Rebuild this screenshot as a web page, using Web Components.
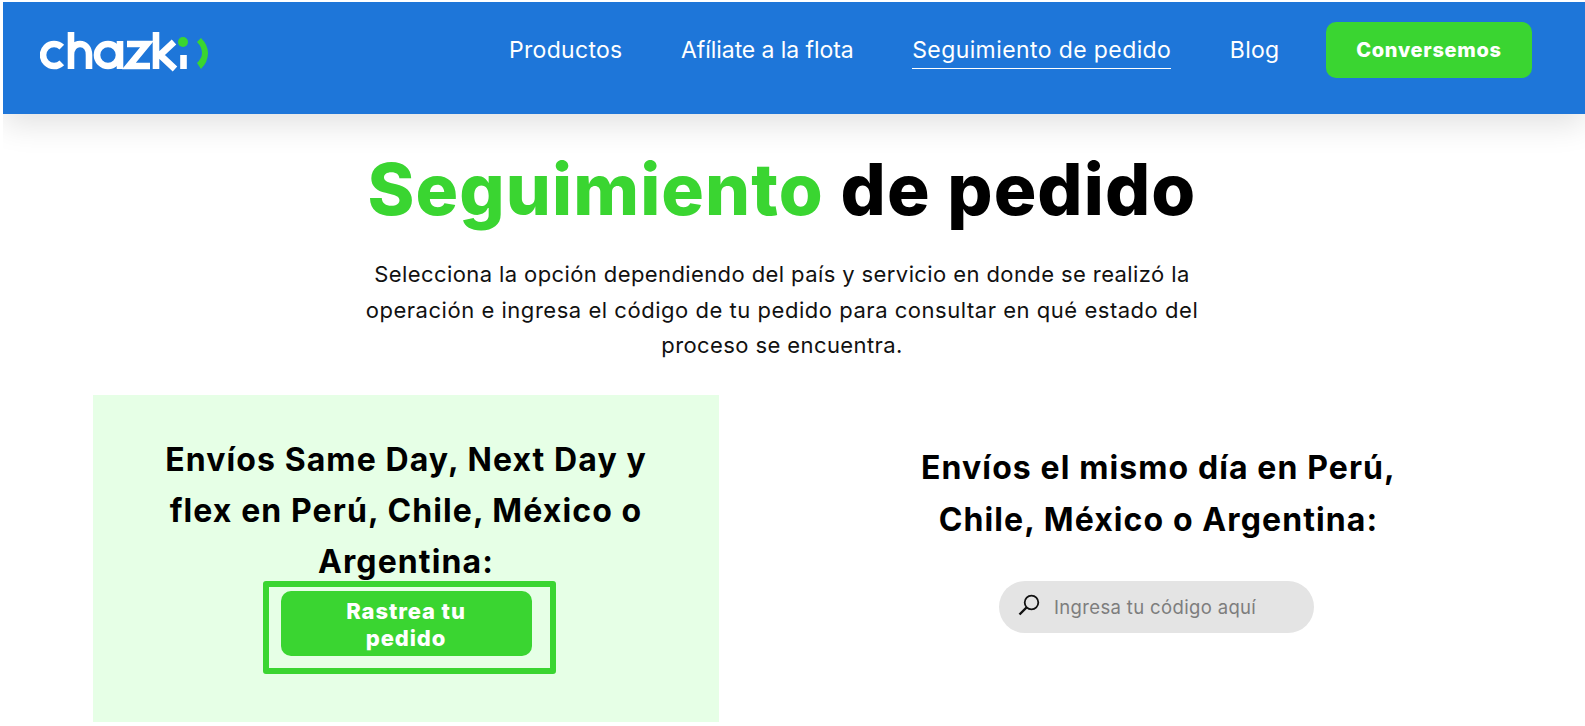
<!DOCTYPE html>
<html lang="es"><head><meta charset="utf-8"><title>Seguimiento de pedido</title>
<style>
html,body{margin:0;padding:0;background:#fff;overflow:hidden}
body{width:1585px;height:726px;font-family:Inter,"Open Sans","Liberation Sans",sans-serif;color:#000}
</style></head><body>
<chazki-page>
<chazki-header></chazki-header>
<chazki-hero></chazki-hero>
</chazki-page>
<script>
function def(name, html){
  customElements.define(name, class extends HTMLElement{
    constructor(){super();this.attachShadow({mode:'open'}).innerHTML=html;}
  });
}
def('chazki-logo',`<style>:host{display:block;width:170px;height:40px}
svg{display:block}</style>
<svg width="170" height="40" viewBox="0 0 170 40" role="img" aria-label="chazki logo">
<g fill="none" stroke="#fff" stroke-width="6.6">
<path d="M21.800 15.200a11 11 0 1 0 0 15.600"/>
<path d="M31 0v37M31 23c0-7 4-11 9-11s9 4 9 11v14"/>
<circle cx="68" cy="23" r="11"/><path d="M80 9v28"/>
<path d="M87 12h20L89 34h21"/>
<path d="M116 0v37M134 10l-14 13 15 14"/>
<path d="M143.500 23v14"/>
</g>
<circle cx="143" cy="10" r="5" fill="#3ad531"/>
<path d="M157 10L161 6Q168 13 168 21Q168 30 161 37L157 31Q162 26 162 21Q162 15 157 10Z" fill="#3ad531"/>
</svg>`);
def('chazki-nav-link',`<style>:host{display:block;font:400 23px/30px Inter,"Open Sans",sans-serif;color:#fff;letter-spacing:.3px;white-space:nowrap}
:host([active]) span{border-bottom-color:#fff}
span{display:block;padding-bottom:3px;border-bottom:1.500px solid transparent}</style><span><slot></slot></span>`);
def('chazki-button',`<style>:host{display:block;background:#3ad531;color:#fff;border-radius:10px;font:800 20px/24px Inter,"Open Sans",sans-serif;letter-spacing:.7px;text-align:center;box-sizing:border-box}</style><slot></slot>`);
def('chazki-header',`<style>
:host{display:flex;align-items:center;margin:2px 0 0 3px;height:112px;background:#1e76d9;padding:0 53px 13px 37px;box-sizing:border-box;position:relative;box-shadow:0 10px 30px rgba(0,0,0,.12);clip-path:inset(0 0 -60px 0)}
nav{display:flex;align-items:center;gap:58.500px;margin-left:auto}
chazki-button{width:206px;height:56px;line-height:57px;margin:0 0 4px -12px;border-radius:10px}
chazki-logo{align-self:flex-start;margin-top:30px}
.afi{letter-spacing:-.07px}
.seg{letter-spacing:.4px}
</style>
<chazki-logo></chazki-logo>
<nav>
<chazki-nav-link>Productos</chazki-nav-link>
<chazki-nav-link class="afi">Afíliate a la flota</chazki-nav-link>
<chazki-nav-link class="seg" active>Seguimiento de pedido</chazki-nav-link>
<chazki-nav-link>Blog</chazki-nav-link>
<chazki-button>Conversemos</chazki-button>
</nav>`);
def('chazki-search',`<style>
:host{display:flex;align-items:center;width:315px;height:52px;border-radius:26px;background:#e4e4e4;box-sizing:border-box;padding-left:18px;gap:13px}
span{font:400 18.500px/24px Inter,"Open Sans",sans-serif;color:#7d7d7d;letter-spacing:.35px}
svg{display:block;margin-top:-4px}
</style>
<svg width="24" height="24" viewBox="0 0 24 24" fill="none" stroke="#111" aria-hidden="true"><circle cx="14.500" cy="9.500" r="6.800" stroke-width="1.800"/><path d="M9.500 14.500L2.500 21.500" stroke-width="2.400"/></svg>
<span>Ingresa tu código aquí</span>`);
def('chazki-hero',`<style>
:host{display:block;text-align:center}
.intro{padding-right:21px}
h1{margin:0;padding-top:33px;font:800 71px/84px Inter,"Open Sans",sans-serif;letter-spacing:1.100px}
h1 b{color:#3ad531;font-weight:800}
p{margin:26px auto 0;width:860px;font:400 22px/35.500px Inter,"Open Sans",sans-serif;letter-spacing:.4px;color:#111}
p span{letter-spacing:.53px}
.panels{display:flex;margin-top:31px;padding-left:93px}
.left{width:626px;height:327px;background:#e6ffe6;padding-top:39px;box-sizing:border-box;display:flex;flex-direction:column;align-items:center}
h2{margin:0;font:700 32px/51px Inter,"Open Sans",sans-serif;letter-spacing:1.100px;text-align:center}
.left h2{width:540px}
.frame{width:293px;height:93px;box-sizing:border-box;border:6px solid #3ad531;border-radius:3px;margin:-6px 0 0 6px;padding:4px 18px 0 12px}
.frame chazki-button{height:65px;padding:7px 60px 0;line-height:27px;font-size:22px;letter-spacing:.9px}
.right{flex:1;display:flex;flex-direction:column;align-items:center;padding-top:47px;margin-left:13px;max-width:876px}
.right h2{width:540px;line-height:52px}
chazki-search{margin:35px 4px 0 0}
</style>
<div class="intro">
<h1><b>Seguimiento</b> de pedido</h1>
<p>Selecciona la opción dependiendo del país y servicio en donde se realizó la<br><span>operación e ingresa el código de tu pedido para consultar en qué estado del</span><br>proceso se encuentra.</p>
</div>
<div class="panels">
<section class="left">
<h2>Envíos Same Day, Next Day y<br>flex en Perú, Chile, México o<br>Argentina:</h2>
<div class="frame"><chazki-button>Rastrea tu pedido</chazki-button></div>
</section>
<section class="right">
<h2>Envíos el mismo día en Perú,<br>Chile, México o Argentina:</h2>
<chazki-search></chazki-search>
</section>
</div>`);
def('chazki-page',`<style>:host{display:block}</style><slot></slot>`);
</script>
</body></html>
